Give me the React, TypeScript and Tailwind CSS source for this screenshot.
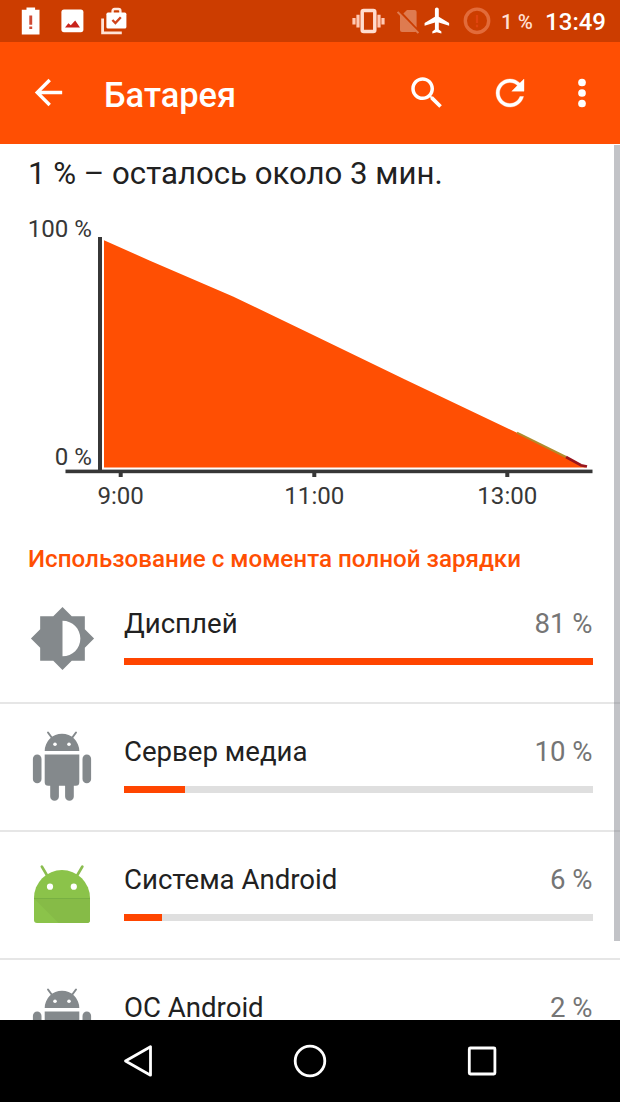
import type { ReactNode } from "react";

type UsageItem = {
  name: string;
  percent: string;
  fill: number;
  icon: ReactNode;
};

function StatusIcons() {
  return (
    <div className="flex items-center">
      <svg width="20" height="28" viewBox="0 0 20 28">
        <path d="M5.5.4h8.6v2.4h4.4V27.5H.8V2.8h4.7z" fill="#fff" />
        <path d="M8.3 8.5h2.9v9.2H8.3zm0 11h2.9v2.4H8.3z" fill="#cf4a34" />
      </svg>
      <svg className="ml-5" width="23" height="24" viewBox="0 0 23 24">
        <rect x="0.4" y="0.6" width="22" height="22.6" rx="2.6" fill="#fff" />
        <path d="M4 18.6l3.4-4.4 2.4 2 4.4-4.6 4.8 7z" fill="#c8231c" />
      </svg>
      <svg className="ml-[17px]" width="27" height="28" viewBox="0 0 27 28">
        <path
          d="M1.6 11.5v14.4h19.2"
          fill="none"
          stroke="#ffe3d6"
          strokeWidth="2.8"
        />
        <path
          d="M11.6 6.5V4q0-2 2-2h3.8q2 0 2 2v2.5"
          fill="none"
          stroke="#ffe9df"
          strokeWidth="2.4"
        />
        <rect x="5.4" y="5.6" width="20" height="16" rx="1.6" fill="#fff" />
        <path
          d="M11.4 13l3 3 5.4-5.8"
          fill="none"
          stroke="#d0441c"
          strokeWidth="2.4"
        />
      </svg>
    </div>
  );
}

function StatusBar() {
  return (
    <div className="flex h-[41.5px] shrink-0 items-center bg-[#cc3d00] pl-[21px] pr-[14px]">
      <StatusIcons />
      <div className="ml-auto flex items-center">
        <svg width="33" height="26" viewBox="0 0 33 26">
          <rect
            x="10.2"
            y="2.4"
            width="12.6"
            height="21"
            rx="1.5"
            fill="none"
            stroke="#ffddcf"
            strokeWidth="3.5"
          />
          <path
            d="M6 6.8v12.6M2 10v6.4M27 6.8v12.6M31 10v6.4"
            stroke="#ffc9b3"
            strokeWidth="3.2"
          />
        </svg>
        <svg className="ml-3" width="22" height="26" viewBox="0 0 22 26">
          <path
            d="M10 2h7.6q2 0 2 2v15.4L6.4 5.6zM3 6.6L19.4 23.6q-.6.4-1.4.4H5q-2 0-2-2z"
            fill="#de7b50"
          />
          <path d="M.6 4l20.8 21" stroke="#de7b50" strokeWidth="2" />
        </svg>
        <svg
          className="ml-[3px]"
          width="31"
          height="31"
          viewBox="0 0 24 24"
          fill="#fff"
        >
          <path d="M21 16v-2l-8-5V3.5c0-.83-.67-1.5-1.5-1.5S10 2.67 10 3.5V9l-8 5v2l8-2.5V19l-2 1.5V22l3.5-1 3.5 1v-1.5L13 19v-5.5l8 2.5z" />
        </svg>
        <svg className="ml-[10px]" width="28" height="28" viewBox="0 0 28 28">
          <circle
            cx="14"
            cy="13.8"
            r="11.7"
            fill="none"
            stroke="#e26b3a"
            strokeWidth="3.4"
          />
          <path d="M14 8v8M14 17.8v2.4" stroke="#e0430f" strokeWidth="2.2" />
        </svg>
        <span className="ml-[10px] mt-0.5 w-[33px] whitespace-nowrap text-[20.5px] font-medium leading-6 text-[#ffdfd2]">
          1 %
        </span>
        <span className="ml-[11px] mt-0.5 text-[24px] font-medium leading-6 text-white">
          13:49
        </span>
      </div>
    </div>
  );
}

function AppBar() {
  return (
    <div className="flex h-[102.5px] shrink-0 items-center bg-[#ff4f03] pl-7 pr-[17px] text-white">
      <svg width="41" height="41" viewBox="0 0 24 24" fill="currentColor">
        <path d="M20 11H7.83l5.59-5.59L12 4l-8 8 8 8 1.41-1.41L7.83 13H20v-2z" />
      </svg>
      <h1 className="ml-[35px] mt-1 text-[34.4px] font-medium leading-10">
        Батарея
      </h1>
      <div className="ml-auto flex items-center">
        <svg width="42" height="42" viewBox="0 0 24 24" fill="currentColor">
          <path d="M15.5 14h-.79l-.28-.27C15.41 12.59 16 11.11 16 9.5 16 5.91 13.09 3 9.5 3S3 5.91 3 9.5 5.91 16 9.5 16c1.61 0 3.09-.59 4.23-1.57l.27.28v.79l5 4.99L20.49 19l-4.99-5zm-6 0C7.01 14 5 11.99 5 9.5S7.01 5 9.5 5 14 7.01 14 9.5 11.99 14 9.5 14z" />
        </svg>
        <svg
          className="ml-[41px]"
          width="42"
          height="42"
          viewBox="0 0 24 24"
          fill="currentColor"
          stroke="currentColor"
          strokeWidth="0.2"
        >
          <path d="M17.65 6.35C16.2 4.9 14.21 4 12 4c-4.42 0-7.99 3.58-7.99 8s3.57 8 7.99 8c3.73 0 6.84-2.55 7.73-6h-2.08c-.82 2.33-3.04 4-5.65 4-3.31 0-6-2.69-6-6s2.69-6 6-6c1.66 0 3.14.69 4.22 1.78L13 11h7V4l-2.35 2.35z" />
        </svg>
        <svg
          className="ml-[30px]"
          width="42"
          height="42"
          viewBox="0 0 24 24"
          fill="currentColor"
        >
          <circle cx="12" cy="6" r="2.2" />
          <circle cx="12" cy="12" r="2.2" />
          <circle cx="12" cy="18" r="2.2" />
        </svg>
      </div>
    </div>
  );
}

const ticks = [
  { x: 120.7, label: "9:00" },
  { x: 314.3, label: "11:00" },
  { x: 507.3, label: "13:00" },
];

function BatteryChart() {
  return (
    <svg
      className="block h-[310px] w-full"
      viewBox="0 210 620 310"
      fontSize="24.1"
      fill="#373737"
    >
      <path
        d="M104 240.3L150 260.7 233 296.5 310 333.5 405 379.5 517 432.7 566 457 586 467.6H104z"
        fill="#ff4f03"
      />
      <path
        d="M517 432.7L566 457"
        stroke="#b08a2c"
        strokeWidth="2"
        fill="none"
      />
      <path
        d="M566 457L581 465.2 587 466.6"
        stroke="#99151c"
        strokeWidth="2.6"
        fill="none"
      />
      <rect x="98" y="237" width="4" height="235" />
      <rect x="65.5" y="469.6" width="527" height="3.6" />
      <text x="92" y="236.8" textAnchor="end">
        100 %
      </text>
      <text x="92" y="464.8" textAnchor="end">
        0 %
      </text>
      {ticks.map((tick) => (
        <g key={tick.label}>
          <rect x={tick.x - 2} y="473" width="4" height="4" />
          <text x={tick.x} y="503.8" textAnchor="middle">
            {tick.label}
          </text>
        </g>
      ))}
    </svg>
  );
}

function BrightnessIcon() {
  return (
    <svg width="67" height="67" viewBox="0 0 24 24" fill="#84898c">
      <path d="M20 15.31L23.31 12 20 8.69V4h-4.69L12 .69 8.69 4H4v4.69L.69 12 4 15.31V20h4.69L12 23.31 15.31 20H20v-4.69zM12 18.4V5.6c3.6 0 6.4 2.86 6.4 6.4s-2.8 6.4-6.4 6.4z" />
    </svg>
  );
}

function AndroidIcon() {
  return (
    <svg width="70" height="70" viewBox="0 0 70 70" fill="#84898c">
      <path
        d="M21 1.5l4.4 6M49 1.5l-4.4 6"
        stroke="#84898c"
        strokeWidth="2"
        strokeLinecap="round"
      />
      <path d="M17.7 20a17.3 17.3 0 0 1 34.6 0z" />
      <path d="M17.7 23.6h34.6v27.6q0 3.5-3.5 3.5h-2v10.7a4.35 4.35 0 0 1-8.7 0V54.7h-6.2v10.7a4.35 4.35 0 0 1-8.7 0V54.7h-2q-3.5 0-3.5-3.5z" />
      <rect x="5.9" y="23.6" width="8.6" height="28.6" rx="4.3" />
      <rect x="55.5" y="23.6" width="8.6" height="28.6" rx="4.3" />
      <circle cx="28" cy="13.2" r="1.8" fill="#fff" />
      <circle cx="42" cy="13.2" r="1.8" fill="#fff" />
    </svg>
  );
}

function AndroidHeadIcon() {
  return (
    <svg width="70" height="70" viewBox="27 860 70 70" fill="#8bc34a">
      <path
        d="M41.8 866.5l5.6 9.5M82.4 866.5l-5.6 9.5"
        stroke="#8bbd50"
        strokeWidth="2.6"
        strokeLinecap="round"
      />
      <path d="M34 898a28 28 0 0 1 56 0v22q0 3-3 3H37q-3 0-3-3z" />
      <path
        d="M34 898.5h56V920q0 3-3 3H58.5z"
        fill="#86bb47"
      />
      <path d="M34 898.5h56" stroke="#78b043" strokeWidth="1.2" />
      <circle cx="50" cy="886.7" r="3.1" fill="#fff" />
      <circle cx="73.8" cy="886.7" r="3.1" fill="#fff" />
    </svg>
  );
}

const items: UsageItem[] = [
  { name: "Дисплей", percent: "81 %", fill: 100, icon: <BrightnessIcon /> },
  { name: "Сервер медиа", percent: "10 %", fill: 13, icon: <AndroidIcon /> },
  {
    name: "Система Android",
    percent: "6 %",
    fill: 8.1,
    icon: <AndroidHeadIcon />,
  },
  { name: "ОС Android", percent: "2 %", fill: 3, icon: <AndroidIcon /> },
];

function UsageRow({ item }: { item: UsageItem }) {
  return (
    <li className="flex h-[128.3px] shrink-0 border-b-2 border-[#e6e6e6] pl-[27px] pr-[27.5px] pt-[26px]">
      <div className="flex h-[73px] w-[70px] items-center justify-center">
        {item.icon}
      </div>
      <div className="ml-[27px] flex-1 pt-[6px]">
        <div className="flex justify-between text-[27.6px] leading-8">
          <span className="text-[#212121]">{item.name}</span>
          <span className="text-[#757575]">{item.percent}</span>
        </div>
        <div className="mt-[18px] h-[7px] bg-[#dfdfdf]">
          <div
            className="h-full bg-[#ff4500]"
            style={{ width: `${item.fill}%` }}
          />
        </div>
      </div>
    </li>
  );
}

function NavBar() {
  return (
    <div className="flex h-[82px] shrink-0 items-center justify-center gap-[138px] bg-black">
      <svg
        width="34"
        height="34"
        viewBox="0 0 34 34"
        fill="none"
        stroke="#fff"
        strokeWidth="2.8"
        strokeLinejoin="round"
      >
        <path d="M4.5 17L29.5 2.8v28.4z" />
      </svg>
      <svg width="34" height="34" viewBox="0 0 34 34">
        <circle
          cx="17"
          cy="17"
          r="14.8"
          fill="none"
          stroke="#fff"
          strokeWidth="2.8"
        />
      </svg>
      <svg width="34" height="34" viewBox="0 0 34 34">
        <rect
          x="4.3"
          y="4"
          width="25.6"
          height="26"
          rx="1"
          fill="none"
          stroke="#fff"
          strokeWidth="2.8"
        />
      </svg>
    </div>
  );
}

export default function App() {
  return (
    <div className="flex h-[1102px] w-[620px] flex-col overflow-hidden bg-white font-['Roboto',sans-serif]">
      <StatusBar />
      <AppBar />
      <main className="relative min-h-0 flex-1 overflow-hidden">
        <p className="h-[66px] pl-7 pt-3 text-[31.2px] leading-9 text-[#212121]">
          1 % – осталось около 3 мин.
        </p>
        <BatteryChart />
        <h2 className="h-[55.5px] pl-7 pt-[25px] text-[24.2px] font-medium leading-7 text-[#ff4f03]">
          Использование с момента полной зарядки
        </h2>
        <ul>
          {items.map((item) => (
            <UsageRow key={item.name} item={item} />
          ))}
        </ul>
        {/* scrollbar thumb */}
        <div className="absolute right-0 top-px h-[796px] w-[6.5px] bg-[#777a82]/45" />
      </main>
      <NavBar />
    </div>
  );
}
